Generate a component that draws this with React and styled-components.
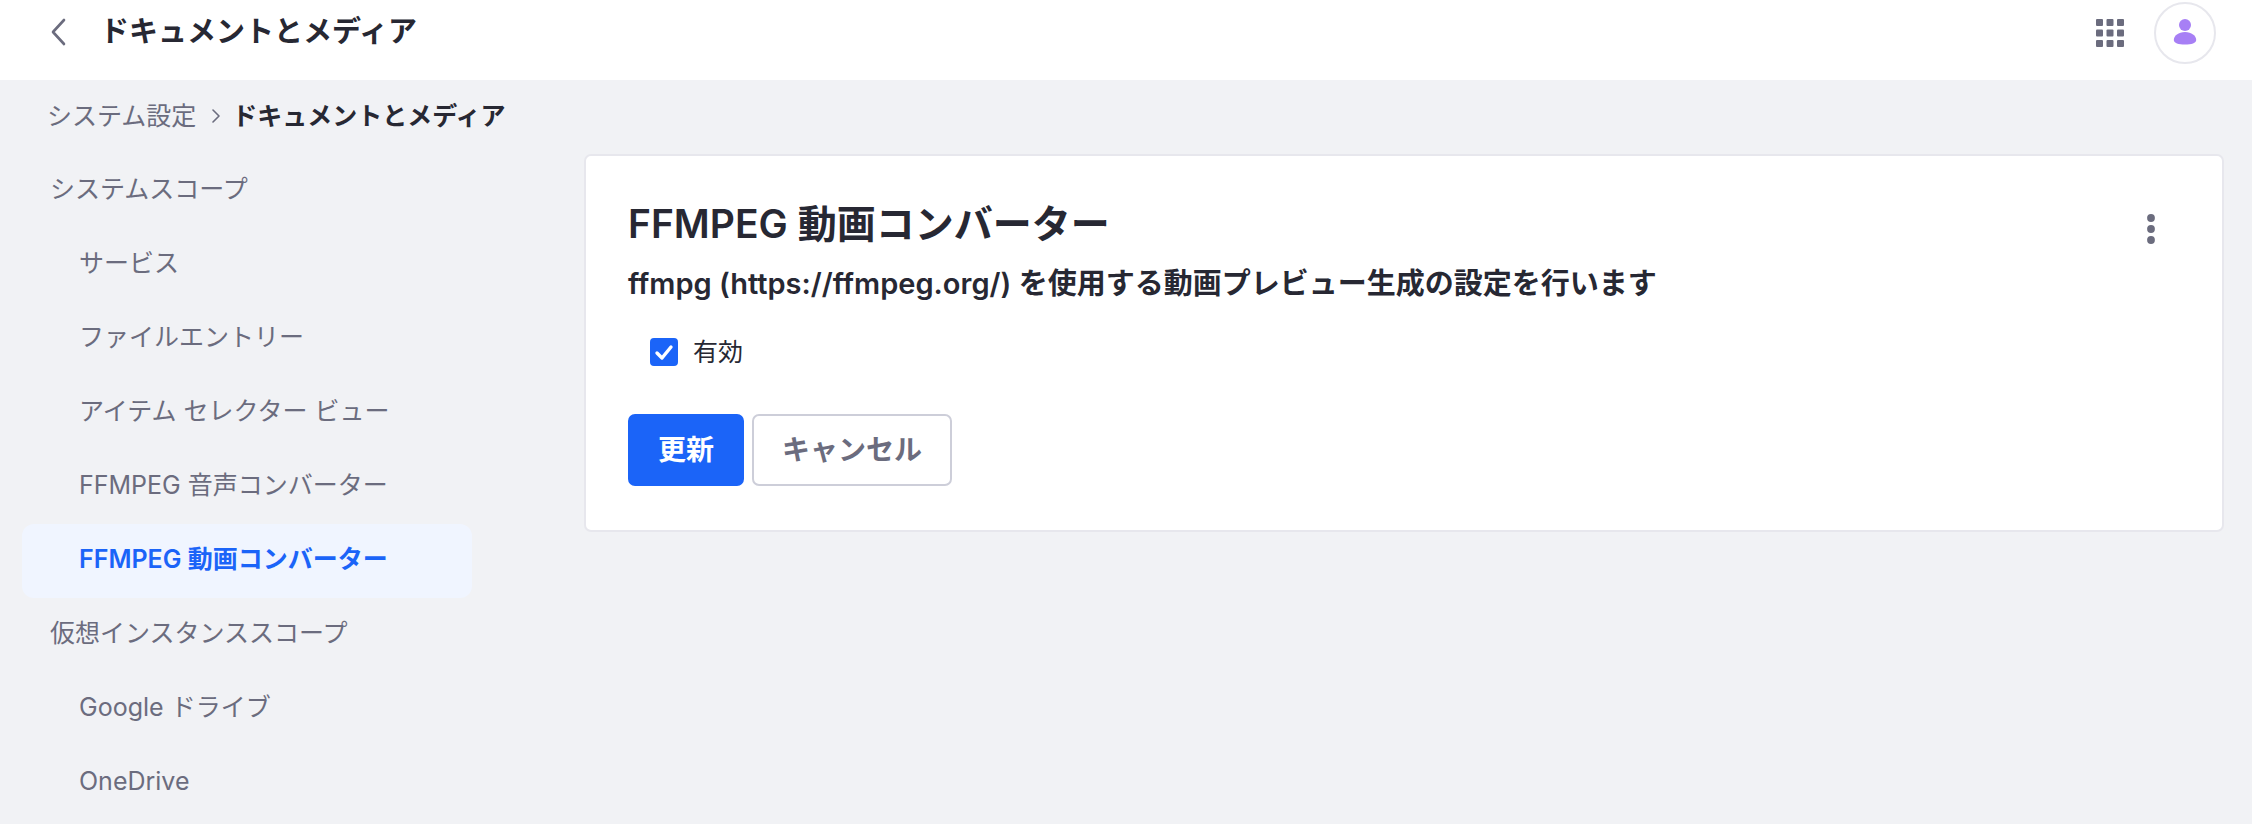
import styled, { createGlobalStyle } from 'styled-components'
import { useState } from 'react'

const GlobalStyle = createGlobalStyle`
  * {
    box-sizing: border-box;
  }

  body {
    margin: 0;
    background-color: #f1f2f5;
    color: #272833;
    font-family: Inter, 'Noto Sans CJK JP', sans-serif;
    font-size: 25px;
    line-height: 38px;
  }
`

const Header = styled.header`
  display: flex;
  align-items: center;
  height: 80px;
  padding: 0 36px 16px 44px;
  background-color: #ffffff;
`

const BackLink = styled.a`
  display: flex;
  justify-content: center;
  width: 28px;
  color: #6b6c7e;
`

const HeaderTitle = styled.h1`
  flex: 1;
  margin: 0 0 0 28px;
  font-size: 28px;
  font-weight: 600;
`

const HeaderActions = styled.div`
  display: flex;
  align-items: center;
  gap: 30px;
  padding-top: 2px;
`

const IconButton = styled.button`
  display: flex;
  align-items: center;
  justify-content: center;
  padding: 0;
  border: none;
  background: none;
  color: #6b6c7e;
  cursor: pointer;
`

const MenuButton = styled(IconButton)`
  padding-top: 10px;
`

const AvatarButton = styled(IconButton)`
  width: 62px;
  height: 62px;
  border: 2px solid #e7e7ed;
  border-radius: 50%;
  color: #a77ff5;
`

const Breadcrumb = styled.ol`
  display: flex;
  align-items: center;
  gap: 12px;
  margin: 0;
  padding: 17px 47px 19px;
  list-style: none;
`

const Crumb = styled.li`
  display: flex;
  align-items: center;
  gap: 16px;
  color: #6b6c7e;

  &[aria-current] {
    color: #272833;
    font-weight: 600;
  }
`

const CrumbLink = styled.a`
  color: inherit;
  text-decoration: none;
`

const Page = styled.div`
  display: grid;
  grid-template-columns: 450px minmax(0, 1fr);
  gap: 112px;
  align-items: start;
  padding: 0 28px 0 22px;
`

const NavList = styled.ul`
  margin: 0;
  padding: 0;
  list-style: none;
`

const NavHeading = styled.div`
  padding: 16px 28px 20px;
  color: #6b6c7e;
`

const NavLink = styled.a`
  display: block;
  padding: 16px 28px 20px 57px;
  border-radius: 12px;
  background-color: ${(props) => (props.$active ? '#f0f5ff' : 'transparent')};
  color: ${(props) => (props.$active ? '#1b64f8' : '#6b6c7e')};
  font-weight: ${(props) => (props.$active ? 600 : 400)};
  text-decoration: none;
`

const Sheet = styled.form`
  padding: 44px 42px;
  border: 2px solid #e7e7ed;
  border-radius: 7px;
  background-color: #ffffff;
`

const SheetHeader = styled.div`
  display: flex;
  align-items: center;
  justify-content: space-between;
  margin-bottom: 16px;
  padding-right: 25px;
`

const SheetTitle = styled.h2`
  margin: 0;
  font-size: 39px;
  font-weight: 600;
  line-height: 48px;
`

const SheetText = styled.h3`
  margin: 0;
  font-size: 29px;
  font-weight: 600;
  line-height: 40px;
`

const CheckRow = styled.label`
  display: flex;
  align-items: center;
  width: fit-content;
  gap: 15px;
  margin: 29px 0 43px 22px;
  cursor: pointer;
`

const CheckBox = styled.span`
  position: relative;
  display: flex;
`

const CheckInput = styled.input`
  appearance: none;
  width: 28px;
  height: 28px;
  margin: 0;
  border: 2px solid #cdced9;
  border-radius: 4px;
  background-color: #ffffff;
  cursor: pointer;

  &:checked {
    border-color: #1b64f8;
    background-color: #1b64f8;
  }
`

const CheckMark = styled.svg`
  position: absolute;
  inset: 0;
  pointer-events: none;
`

const ButtonRow = styled.div`
  display: flex;
  gap: 8px;
`

const Button = styled.button`
  height: 72px;
  padding: 0 28px;
  border: 2px solid ${(props) => (props.$primary ? '#1b64f8' : '#cdced9')};
  border-radius: 7px;
  background-color: ${(props) => (props.$primary ? '#1b64f8' : '#ffffff')};
  color: ${(props) => (props.$primary ? '#ffffff' : '#6b6c7e')};
  font-family: inherit;
  font-size: 28px;
  font-weight: 600;
  line-height: 40px;
  cursor: pointer;
`

const TopTitle = styled(HeaderTitle)`
  font-size: 29px;
`

const scopes = [
  {
    name: 'システムスコープ',
    items: [
      'サービス',
      'ファイルエントリー',
      'アイテム セレクター ビュー',
      'FFMPEG 音声コンバーター',
      'FFMPEG 動画コンバーター'
    ]
  },
  {
    name: '仮想インスタンススコープ',
    items: ['Google ドライブ', 'OneDrive']
  }
]

const BackIcon = () => (
  <svg width="16" height="28" viewBox="0 0 16 28" fill="none" stroke="currentColor">
    <path d="M14 2 L3 14 L14 26" strokeWidth="2.6" strokeLinecap="round" strokeLinejoin="round" />
  </svg>
)

const SeparatorIcon = () => (
  <svg width="8" height="14" viewBox="0 0 8 14" fill="none" stroke="currentColor">
    <path d="M1 1 L7 7 L1 13" strokeWidth="1.6" strokeLinecap="round" strokeLinejoin="round" />
  </svg>
)

const GridIcon = () => (
  <svg width="28" height="28" viewBox="0 0 28 28" fill="currentColor">
    {[0, 10.5, 21].map((y) =>
      [0, 10.5, 21].map((x) => <rect key={`${x}-${y}`} x={x} y={y} width="7" height="7" rx="1" />)
    )}
  </svg>
)

const UserIcon = () => (
  <svg width="24" height="28" viewBox="0 0 24 28" fill="currentColor">
    <circle cx="12" cy="6" r="6" />
    <path d="M12 13 C18.5 13 23.2 16.8 23.2 21 C23.2 24.2 18.5 25.5 12 25.5 C5.5 25.5 0.8 24.2 0.8 21 C0.8 16.8 5.5 13 12 13 Z" />
  </svg>
)

const KebabIcon = () => (
  <svg width="8" height="30" viewBox="0 0 8 30" fill="currentColor">
    <circle cx="4" cy="4" r="3.9" />
    <circle cx="4" cy="15" r="3.9" />
    <circle cx="4" cy="26" r="3.9" />
  </svg>
)

const App = () => {
  const [selected, setSelected] = useState('FFMPEG 動画コンバーター')
  const [enabled, setEnabled] = useState(true)

  const onNavClick = (event, item) => {
    event.preventDefault()
    setSelected(item)
  }

  return (
    <>
      <GlobalStyle />
      <Header>
        <BackLink href="#back" aria-label="戻る">
          <BackIcon />
        </BackLink>
        <TopTitle>ドキュメントとメディア</TopTitle>
        <HeaderActions>
          <IconButton type="button" aria-label="アプリケーション">
            <GridIcon />
          </IconButton>
          <AvatarButton type="button" aria-label="ユーザー">
            <UserIcon />
          </AvatarButton>
        </HeaderActions>
      </Header>
      <nav>
        <Breadcrumb>
          <Crumb>
            <CrumbLink href="#settings">システム設定</CrumbLink>
            <SeparatorIcon />
          </Crumb>
          <Crumb aria-current="page">ドキュメントとメディア</Crumb>
        </Breadcrumb>
      </nav>
      <Page>
        <nav>
          {scopes.map((scope) => (
            <section key={scope.name}>
              <NavHeading>{scope.name}</NavHeading>
              <NavList>
                {scope.items.map((item) => (
                  <li key={item}>
                    <NavLink
                      href="#item"
                      $active={item === selected}
                      onClick={(event) => onNavClick(event, item)}
                    >
                      {item}
                    </NavLink>
                  </li>
                ))}
              </NavList>
            </section>
          ))}
        </nav>
        <Sheet onSubmit={(event) => event.preventDefault()}>
          <SheetHeader>
            <SheetTitle>FFMPEG 動画コンバーター</SheetTitle>
            <MenuButton type="button" aria-label="オプション">
              <KebabIcon />
            </MenuButton>
          </SheetHeader>
          <SheetText>ffmpg (https://ffmpeg.org/) を使用する動画プレビュー生成の設定を行います</SheetText>
          <CheckRow htmlFor="enabled">
            <CheckBox>
              <CheckInput
                id="enabled"
                type="checkbox"
                checked={enabled}
                onChange={(event) => setEnabled(event.target.checked)}
              />
              <CheckMark width="28" height="28" viewBox="0 0 28 28" fill="none" stroke="#ffffff">
                <path d="M7 15 L12 20 L21 9" strokeWidth="3.4" strokeLinecap="round" strokeLinejoin="round" />
              </CheckMark>
            </CheckBox>
            有効
          </CheckRow>
          <ButtonRow>
            <Button type="submit" $primary>
              更新
            </Button>
            <Button type="button">キャンセル</Button>
          </ButtonRow>
        </Sheet>
      </Page>
    </>
  )
}

export default App
